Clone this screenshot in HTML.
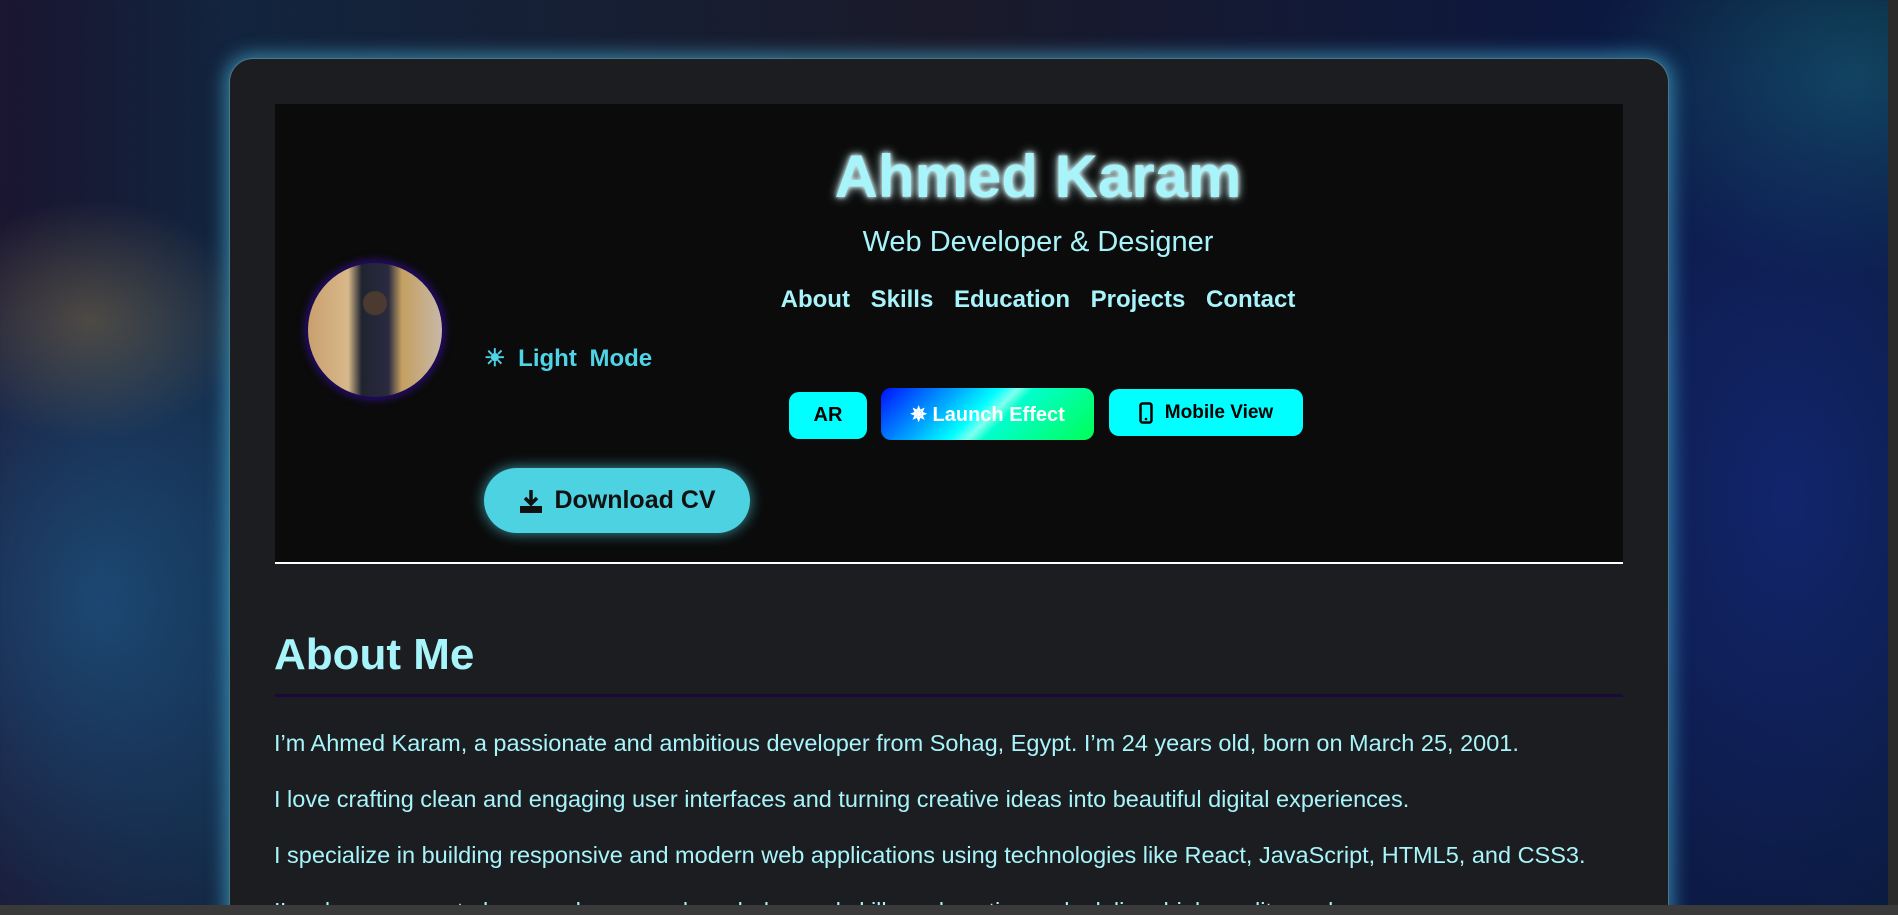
<!DOCTYPE html>
<html><head><meta charset="utf-8"><style>
*{margin:0;padding:0;box-sizing:border-box}
html,body{width:1898px;height:915px;overflow:hidden}
body{position:relative;font-family:"Liberation Sans",sans-serif;
background:
radial-gradient(ellipse 160px 120px at 90px 320px,rgba(200,150,60,.3),transparent),
radial-gradient(ellipse 300px 400px at 100px 600px,rgba(30,90,140,.7),transparent),
radial-gradient(ellipse 300px 500px at 1790px 500px,rgba(20,40,120,.8),transparent),
radial-gradient(ellipse 260px 200px at 1850px 80px,rgba(20,90,110,.7),transparent),
linear-gradient(90deg,#1a1530 0%,#12243e 12%,#1a1a2a 50%,#0c1840 85%,#0a1a3a 100%);}
.card{position:absolute;left:229px;top:58px;width:1440px;height:880px;border-radius:24px;
background:#1c1d20;box-shadow:0 0 18px 4px rgba(80,200,240,.55);border:1px solid rgba(120,210,240,.5)}
.hdr{position:absolute;left:275px;top:104px;width:1348px;height:459px;background:#0b0b0b}
.hr{position:absolute;left:275px;top:562px;width:1348px;height:2px;background:#fff}
.c{position:absolute;left:275px;width:1526px;text-align:center;color:#a8f4fb}
.name{top:142px;font-size:60px;font-weight:bold;text-shadow:0 0 10px #cffcff,0 0 4px #fff}
.sub{top:226px;font-size:29px}
.nav{top:286px;font-size:24px;font-weight:bold;word-spacing:14px}
.av{position:absolute;left:305px;top:260px;width:140px;height:140px;border-radius:50%;
border:3px solid #1c0a50;box-shadow:0 0 8px #2a1070;
background:radial-gradient(circle at 50% 30%,#4a3a30 10%,transparent 11%),linear-gradient(90deg,#c9a070 0%,#d8b88a 30%,#1f2430 40%,#2a2a40 60%,#c4a060 70%,#c8b8a8 100%)}
.lm{position:absolute;left:484px;top:344px;color:#4fd3e6;font-size:24px;font-weight:bold;word-spacing:6px}
.btn{position:absolute;border-radius:10px;font-weight:bold;font-size:19px;display:flex;align-items:center;justify-content:center}
.ar{left:789px;top:392px;width:78px;height:47px;background:#00ffff;color:#000;font-size:20px}
.le{left:881px;top:388px;width:213px;height:52px;color:#fff;font-size:20px;
background:linear-gradient(135deg,#0010ff 0%,#00aaff 30%,#00ffff 45%,#80ffee 52%,#00ffcc 58%,#00ff55 100%)}
.mv{left:1109px;top:389px;width:194px;height:47px;background:#00ffff;color:#000}
.dl{position:absolute;left:484px;top:468px;width:266px;height:65px;border-radius:33px;background:#4dd2e2;
box-shadow:0 0 14px rgba(77,210,226,.7);color:#111;font-size:25px;font-weight:bold;display:flex;align-items:center;justify-content:center;gap:10px}
.h2{position:absolute;left:274px;top:630px;font-size:44px;font-weight:bold;color:#a8f4fb}
.pl{position:absolute;left:275px;top:694px;width:1348px;height:3px;background:#1a0a3a}
.p{position:absolute;left:274px;font-size:23.5px;color:#a8f4fb;white-space:nowrap}
.bar{position:absolute;left:0;top:905px;width:1898px;height:10px;background:#3a3a3a}
.sb{position:absolute;left:1888px;top:0;width:10px;height:905px;background:#2a2a2a}
</style></head><body>
<div class="card"></div>
<div class="hdr"></div>
<div class="c name">Ahmed Karam</div>
<div class="c sub">Web Developer &amp; Designer</div>
<div class="c nav">About Skills Education Projects Contact</div>
<div class="av"></div>
<div class="lm">☀ Light Mode</div>
<div class="btn ar">AR</div>
<div class="btn le">✵ Launch Effect</div>
<div class="btn mv"><svg width="14" height="22" viewBox="0 0 14 22" style="margin-right:12px"><rect x="1.5" y="1.5" width="11" height="19" rx="2" fill="none" stroke="#000" stroke-width="2.5"/><circle cx="7" cy="17" r="1.3"/></svg>Mobile View</div>
<div class="dl"><svg width="26" height="26" viewBox="0 0 26 26"><path d="M13 2v13M7 10l6 6 6-6" stroke="#111" stroke-width="3.5" fill="none"/><rect x="2" y="18" width="22" height="7" fill="#111"/></svg>Download CV</div>
<div class="hr"></div>
<div class="h2">About Me</div>
<div class="pl"></div>
<div class="p" style="top:730px">I’m Ahmed Karam, a passionate and ambitious developer from Sohag, Egypt. I’m 24 years old, born on March 25, 2001.</div>
<div class="p" style="top:786px">I love crafting clean and engaging user interfaces and turning creative ideas into beautiful digital experiences.</div>
<div class="p" style="top:842px">I specialize in building responsive and modern web applications using technologies like React, JavaScript, HTML5, and CSS3.</div>
<div class="p" style="top:898px">I’m always eager to learn and grow my knowledge and skills and continuously deliver high-quality work.</div>
<div class="bar"></div>
<div class="sb"></div>
</body></html>
